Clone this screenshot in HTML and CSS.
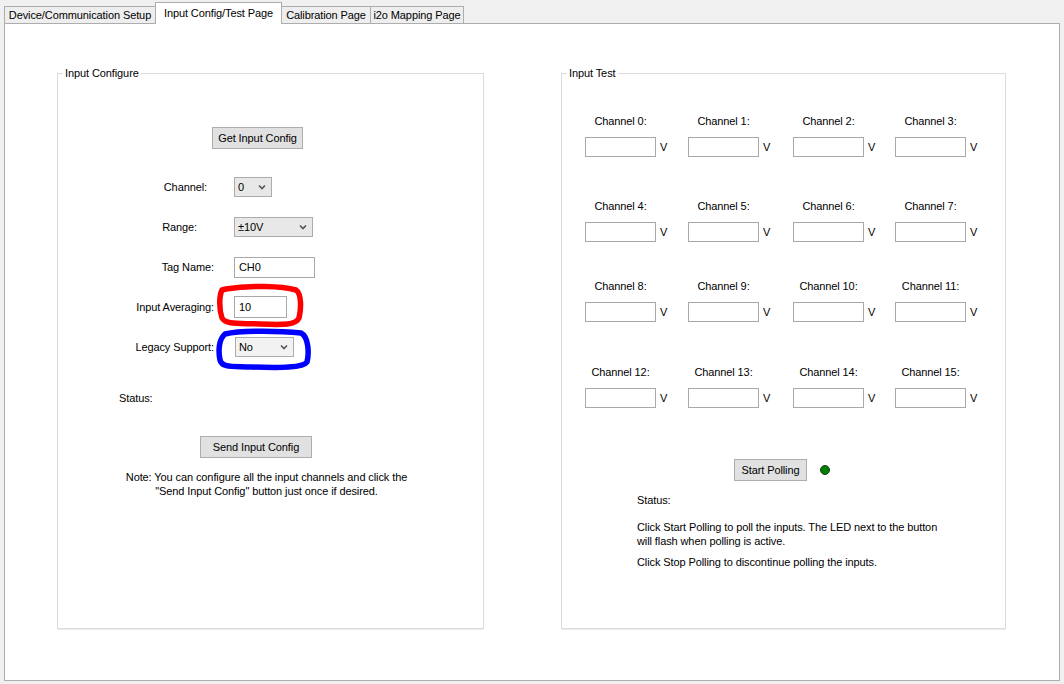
FILE: index.html
```html
<!DOCTYPE html>
<html lang="en">
<head>
    <meta charset="UTF-8">
    <meta name="viewport" content="width=device-width, initial-scale=1.0">
    <title>Input Config/Test Page</title>
    <link rel="stylesheet" href="styles.css">
</head>
<body>
    <!-- tab strip -->
    <div class="tabs">
        <div class="tab tab-device">Device/Communication Setup</div>
        <div class="tab tab-input active">Input Config/Test Page</div>
        <div class="tab tab-cal">Calibration Page</div>
        <div class="tab tab-map">i2o Mapping Page</div>
    </div>

    <div class="panel">
        <!-- left group: input configure -->
        <fieldset class="group group-config">
            <legend>Input Configure</legend>
            <div class="group-body">
                <div class="btn btn-get">Get Input Config</div>

                <div class="form">
                    <div class="label label-channel">Channel:</div>
                    <div class="combo combo-channel"><span>0</span><svg width="8" height="6" viewBox="0 0 8 6"><path d="M1 1.5 L4 4.5 L7 1.5" fill="none" stroke="#555" stroke-width="1.6"/></svg></div>

                    <div class="label label-range">Range:</div>
                    <div class="combo combo-range"><span>±10V</span><svg width="8" height="6" viewBox="0 0 8 6"><path d="M1 1.5 L4 4.5 L7 1.5" fill="none" stroke="#555" stroke-width="1.6"/></svg></div>

                    <div class="label">Tag Name:</div>
                    <div class="textbox textbox-tag">CH0</div>

                    <div class="label">Input Averaging:</div>
                    <div class="textbox textbox-avg">10</div>

                    <div class="label">Legacy Support:</div>
                    <div class="combo combo-legacy"><span>No</span><svg width="8" height="6" viewBox="0 0 8 6"><path d="M1 1.5 L4 4.5 L7 1.5" fill="none" stroke="#555" stroke-width="1.6"/></svg></div>
                </div>

                <div class="status status-config">Status:</div>

                <div class="btn btn-send">Send Input Config</div>

                <div class="note">Note: You can configure all the input channels and click the<br>"Send Input Config" button just once if desired.</div>
            </div>
        </fieldset>

        <!-- right group: input test -->
        <fieldset class="group group-test">
            <legend>Input Test</legend>
            <div class="group-body">
                <div class="channels" id="channels"></div>

                <div class="polling">
                    <div class="btn btn-poll">Start Polling</div>
                    <div class="led"></div>
                </div>

                <div class="status status-test">Status:</div>
                <p class="help help-first">Click Start Polling to poll the inputs. The LED next to the button<br>will flash when polling is active.</p>
                <p class="help help-second">Click Stop Polling to discontinue polling the inputs.</p>
            </div>
        </fieldset>
    </div>

    <!-- hand drawn marks on the screenshot -->
    <svg class="marks" width="1064" height="684" viewBox="0 0 1064 684">
        <path d="M226 289 C250 285, 282 286, 296 290 C302 294, 301 310, 299 318 C296 325, 284 325, 260 324 C240 323, 226 325, 222 318 C219 309, 219 296, 222 290 Z" fill="none" stroke="#ff0000" stroke-width="5.5" stroke-linejoin="round"/>
        <path d="M225 334 C242 330, 282 331, 301 333 C309 337, 309 354, 307 362 C303 368, 280 368, 252 367 C233 366, 222 368, 220 360 C218 350, 219 339, 225 334 Z" fill="none" stroke="#0000ff" stroke-width="5.5" stroke-linejoin="round"/>
    </svg>

    <script>
        // build the 16 channel readouts
        const channels = document.getElementById('channels');
        for (let i = 0; i < 16; i++) {
            const cell = document.createElement('div');
            cell.classList.add('channel');
            cell.innerHTML = `
                <div class="channel-name">Channel ${i}:</div>
                <div class="textbox channel-value"></div>
                <div class="unit">V</div>
            `;
            channels.appendChild(cell);
        }
    </script>
</body>
</html>
```

FILE: styles.css
```css
body {
    font-family: "Liberation Sans", Arial, sans-serif;
    font-size: 11px;
    letter-spacing: -0.1px;
    color: #000;
    background-color: #f0f0f0;
    margin: 0;
    padding: 0;
    width: 1064px;
    height: 684px;
    position: relative;
    overflow: hidden;
}

/* tabs */
.tabs {
    display: flex;
    align-items: flex-end;
    height: 21px;
    padding: 2px 0 0 4px;
}

.tab {
    box-sizing: border-box;
    height: 17px;
    line-height: 16px;
    text-align: center;
    background-color: #eeeeee;
    border-top: 1px solid #adadad;
    border-right: 1px solid #adadad;
    white-space: nowrap;
}

.tab-device {
    width: 152px;
    border-left: 1px solid #adadad;
}

.tab-input {
    width: 127px;
}

.tab-cal {
    width: 89px;
}

.tab-map {
    width: 93px;
}

.tab.active {
    position: relative;
    z-index: 1;
    height: 22px;
    margin-left: -1px;
    margin-bottom: -1px;
    padding-top: 3px;
    line-height: 14px;
    background-color: #fff;
    border-left: 1px solid #adadad;
}

.panel {
    box-sizing: border-box;
    display: flex;
    gap: 77px;
    width: 1056px;
    height: 658px;
    margin-left: 4px;
    padding: 42px 0 0 52px;
    background-color: #fff;
    border: 1px solid #adadad;
}

/* group boxes */
.group {
    box-sizing: border-box;
    height: 563px;
    margin: 0;
    padding: 0;
    border: 1px solid #dcdcdc;
    box-shadow: 0 1px 0 #ececec;
}

.group legend {
    margin-left: 5px;
    padding: 0 2px;
    line-height: 14px;
}

.group-config {
    width: 427px;
}

.group-test {
    width: 444px;
}

.group-body {
    display: flex;
    flex-direction: column;
    align-items: flex-start;
}

.btn {
    box-sizing: border-box;
    height: 22px;
    line-height: 20px;
    text-align: center;
    background-color: #e1e1e1;
    border: 1px solid #adadad;
}

.btn-get {
    width: 91px;
    margin: 47px 0 0 154px;
}

.form {
    display: grid;
    grid-template-columns: 156px auto;
    grid-auto-rows: 22px;
    column-gap: 20px;
    row-gap: 18px;
    align-items: center;
    margin-top: 27px;
}

.label {
    text-align: right;
}

.label-channel {
    padding-right: 7px;
}

.label-range {
    padding-right: 17px;
}

.combo {
    box-sizing: border-box;
    display: flex;
    align-items: center;
    justify-content: space-between;
    height: 20px;
    padding: 0 5px 0 3px;
    background-color: #e8e8e8;
    border: 1px solid #acacac;
}

.combo svg {
    display: block;
}

.combo-channel {
    width: 38px;
}

.combo-range {
    width: 79px;
}

.combo-legacy {
    width: 59px;
    margin-left: 1px;
    background-color: #f2f2f2;
}

.textbox {
    box-sizing: border-box;
    height: 21px;
    line-height: 19px;
    padding-left: 4px;
    background-color: #fff;
    border: 1px solid #a9a9a9;
}

.textbox-tag {
    width: 81px;
}

.textbox-avg {
    width: 53px;
    height: 22px;
    line-height: 20px;
}

.status {
    line-height: 14px;
}

.status-config {
    margin: 33px 0 0 61px;
}

.btn-send {
    width: 112px;
    margin: 31px 0 0 142px;
}

.note {
    box-sizing: border-box;
    width: 417px;
    margin-top: 12px;
    line-height: 14px;
    text-align: center;
}

/* channel readouts */
.channels {
    display: grid;
    grid-template-columns: 103px 105px 102px 110px;
    grid-template-rows: 85px 80px 86px auto;
    margin: 34px 0 0 23px;
}

.channel {
    display: grid;
    grid-template-columns: 71px auto;
    column-gap: 4px;
    align-items: center;
    align-content: start;
}

.channel-name {
    grid-column: 1 / 3;
    width: 71px;
    line-height: 14px;
    text-align: center;
    margin-bottom: 9px;
    white-space: nowrap;
}

.channel-value {
    width: 71px;
    height: 20px;
}

.unit {
    line-height: 14px;
}

.polling {
    display: flex;
    align-items: center;
    margin: 51px 0 0 172px;
}

.btn-poll {
    width: 73px;
}

.led {
    box-sizing: border-box;
    width: 10px;
    height: 10px;
    margin-left: 13px;
    border-radius: 50%;
    background-color: #008000;
    border: 1px solid #1e3a1e;
}

.status-test {
    margin: 12px 0 0 75px;
}

.help {
    margin: 0 0 0 75px;
    line-height: 14px;
    white-space: nowrap;
}

.help-first {
    margin-top: 13px;
}

.help-second {
    margin-top: 7px;
}

.marks {
    position: absolute;
    top: 0;
    left: 0;
    pointer-events: none;
}
```
